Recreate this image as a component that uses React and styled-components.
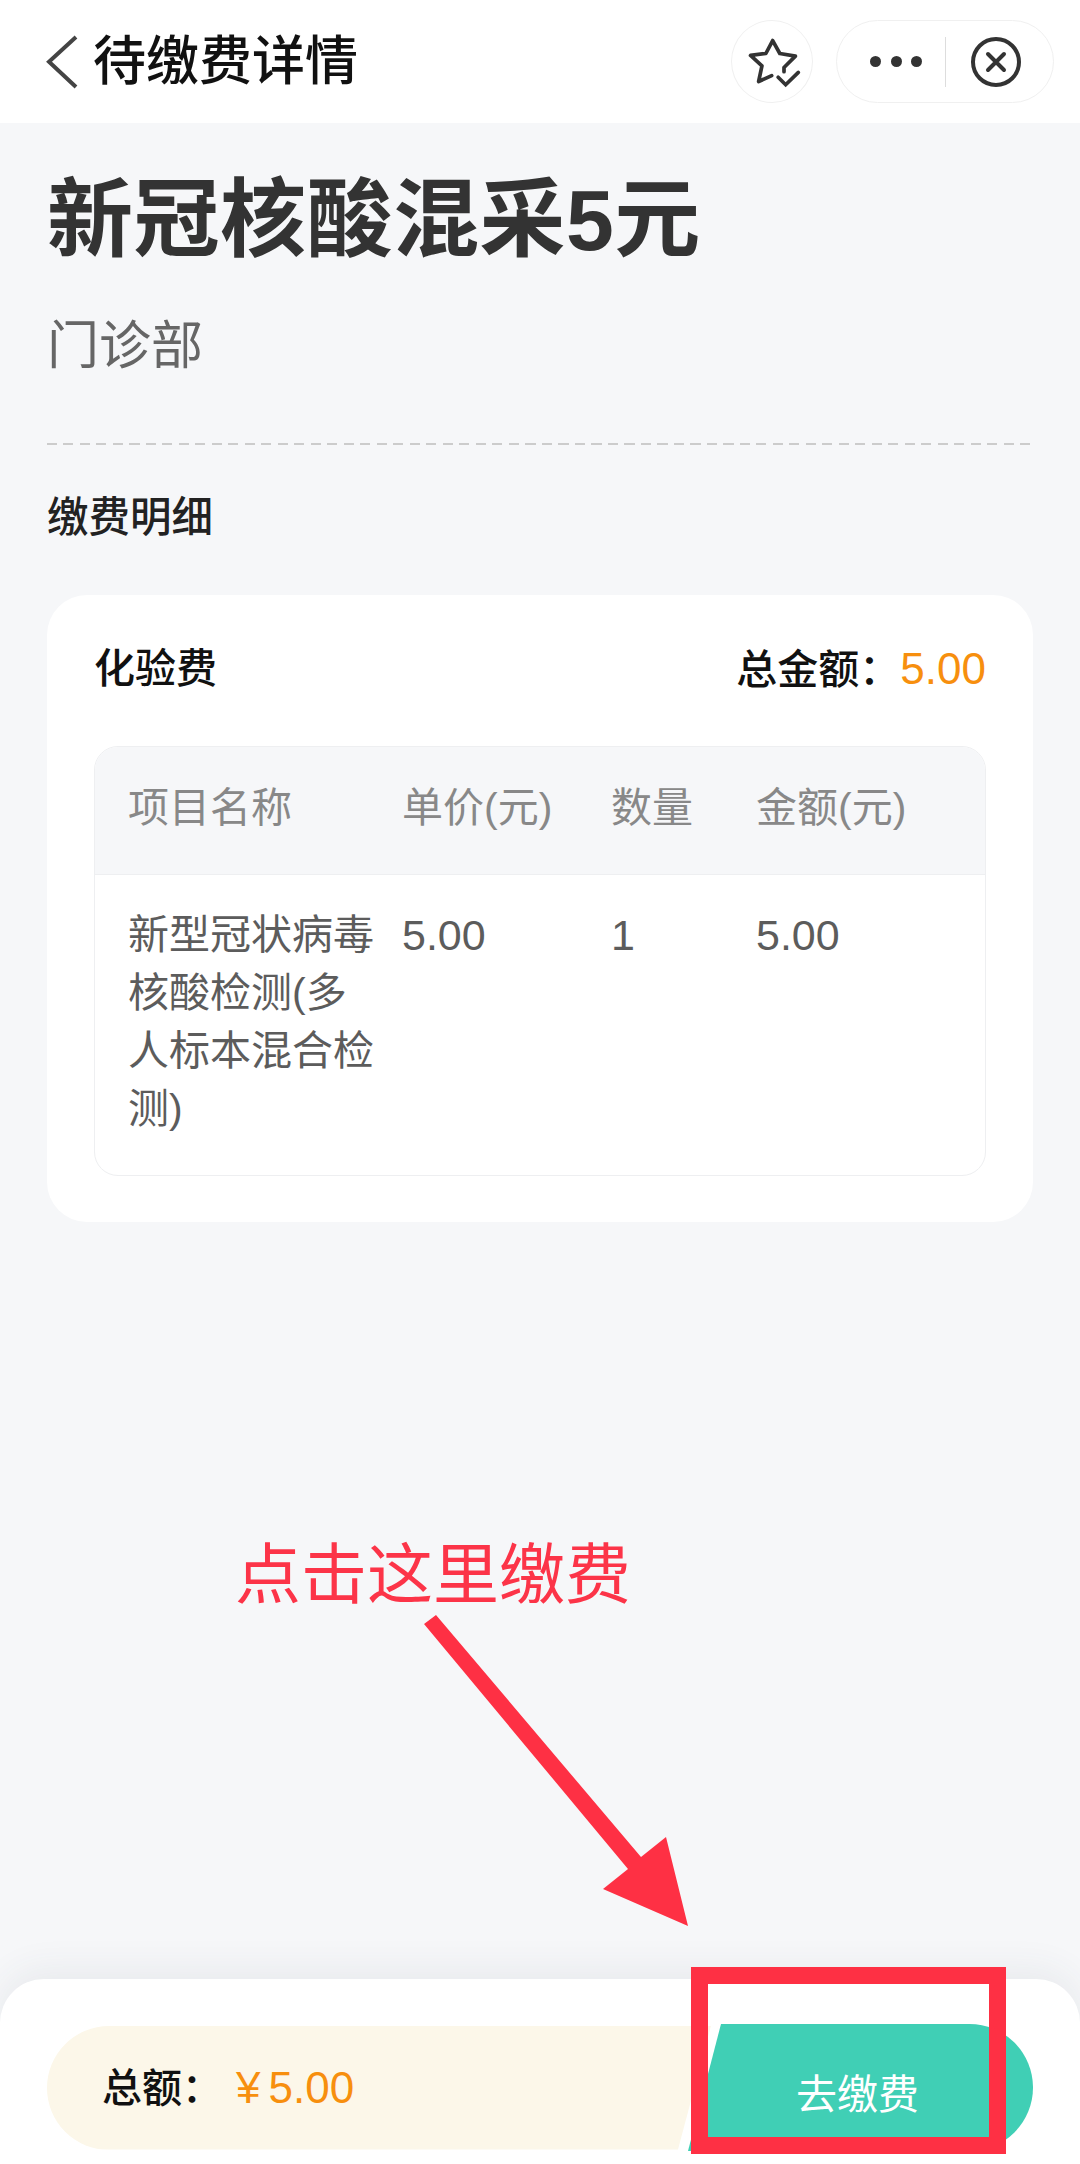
import React from 'react';
import styled, { createGlobalStyle } from 'styled-components';

const GlobalStyle = createGlobalStyle`
  html, body {
    margin: 0;
    padding: 0;
    background: #f6f7f9;
  }
  * {
    box-sizing: border-box;
  }
`;

const Page = styled.div`
  position: relative;
  width: 1080px;
  height: 2164px;
  display: flex;
  flex-direction: column;
  overflow: hidden;
  background: #f6f7f9;
  font-family: "Liberation Sans", "Noto Sans CJK SC", sans-serif;
`;

const TopBar = styled.header`
  height: 123px;
  flex-shrink: 0;
  display: flex;
  align-items: center;
  padding: 0 26px 0 46px;
  background: #fff;
`;

const TitleGroup = styled.div`
  display: flex;
  align-items: center;
  gap: 15px;
  flex: 1;
  h1 {
    margin: 0;
    font-size: 53px;
    line-height: 60px;
    font-weight: 500;
    color: #111;
    white-space: nowrap;
  }
`;

const BackIcon = styled.svg`
  width: 32px;
  height: 54px;
  flex-shrink: 0;
`;

const TopActions = styled.div`
  display: flex;
  align-items: center;
  gap: 23px;
`;

const RoundButton = styled.div`
  width: 82px;
  height: 83px;
  border: 1px solid #f0f0f0;
  border-radius: 50%;
  background: #fff;
  svg {
    display: block;
  }
`;

const Capsule = styled.div`
  width: 218px;
  height: 83px;
  display: flex;
  align-items: center;
  border: 1px solid #f0f0f0;
  border-radius: 42px;
  background: #fff;
`;

const MoreDots = styled.div`
  width: 108px;
  display: flex;
  justify-content: center;
  gap: 9.5px;
  padding-left: 10px;
  span {
    width: 11px;
    height: 11px;
    border-radius: 50%;
    background: #333;
  }
`;

const Separator = styled.div`
  width: 1px;
  height: 50px;
  background: #ddd;
`;

const Main = styled.main`
  flex: 1;
  padding: 47px 47px 0 47px;
`;

const BigTitle = styled.h2`
  margin: 0;
  font-size: 86px;
  line-height: 100px;
  font-weight: 700;
  letter-spacing: 0.5px;
  color: #333;
`;

const Department = styled.div`
  margin-top: 46px;
  font-size: 52px;
  line-height: 60px;
  color: #666;
`;

const Dashed = styled.div`
  height: 2px;
  margin: 67px -2px 0 0;
  background: repeating-linear-gradient(90deg, #ccc 0 10px, transparent 10px 16.5px);
`;

const SectionTitle = styled.div`
  margin-top: 48px;
  font-size: 41.5px;
  line-height: 50px;
  font-weight: 500;
  color: #222;
`;

const Card = styled.section`
  margin-top: 52px;
  padding: 49px 47px 46px;
  border-radius: 40px;
  background: #fff;
`;

const CardHead = styled.div`
  display: flex;
  justify-content: space-between;
  font-size: 41px;
  line-height: 50px;
  font-weight: 500;
  color: #111;
`;

const Amount = styled.span`
  color: #f78f0e;
  font-size: 44px;
  font-weight: 400;
`;

const Table = styled.div`
  margin-top: 51px;
  border: 1px solid #eeeff1;
  border-radius: 24px;
  overflow: hidden;
`;

const TableRow = styled.div`
  display: grid;
  grid-template-columns: 274px 209px 145px 1fr;
  padding-left: 33px;
  font-size: 41px;
  ${(p) =>
    p.$head
      ? `
    height: 128px;
    align-items: center;
    padding-bottom: 14px;
    background: #f6f7f9;
    border-bottom: 1px solid #eeeff1;
    color: #888;
  `
      : `
    padding-top: 31px;
    padding-bottom: 37px;
    line-height: 58px;
    color: #5c5c5c;
  `}
`;

const NameCell = styled.div`
  padding-right: 20px;
`;

const NumberCell = styled.div`
  font-size: 43px;
`;

const Footer = styled.footer`
  height: 185px;
  flex-shrink: 0;
  display: flex;
  align-items: center;
  padding: 45px 47px 13px;
  border-radius: 44px 44px 0 0;
  background: #fff;
  box-shadow: 0 -10px 36px rgba(60, 70, 80, 0.07);
`;

const TotalPill = styled.div`
  flex: 1;
  height: 124px;
  display: flex;
  align-items: center;
  padding: 0 0 5px 55px;
  border-radius: 62px 0 0 62px;
  background: #fcf7e9;
  clip-path: polygon(0 0, 100% 0, calc(100% - 33px) 100%, 0 100%);
  font-size: 40px;
  font-weight: 500;
  color: #111;
`;

const Price = styled.span`
  margin: 5px 0 0 14px;
  font-size: 44px;
  font-weight: 400;
  color: #f78f0e;
`;

const Yen = styled.span`
  margin-right: 8px;
`;

const PayButton = styled.div`
  width: 345px;
  height: 127px;
  margin-left: -23px;
  display: flex;
  align-items: center;
  justify-content: center;
  padding: 6px 6px 0 0;
  border-radius: 0 64px 64px 0;
  background: #40cfb5;
  clip-path: polygon(33px 0, 100% 0, 100% 100%, 0 100%);
  font-size: 41px;
  color: #fff;
`;

// annotations drawn on top of the screenshot
const Hint = styled.div`
  position: absolute;
  left: 235px;
  top: 1535px;
  font-size: 66px;
  line-height: 80px;
  color: #fc3448;
`;

const Arrow = styled.svg`
  position: absolute;
  left: 420px;
  top: 1610px;
`;

const RedBox = styled.div`
  position: absolute;
  left: 691px;
  top: 1967px;
  width: 315px;
  height: 187px;
  border: 17px solid #fe3044;
`;

export default function App() {
  return (
    <Page>
      <GlobalStyle />
      <TopBar>
        <TitleGroup>
          <BackIcon viewBox="0 0 32 54">
            <path d="M30 2 L3 26.7 L30 52" fill="none" stroke="#444" strokeWidth="4" />
          </BackIcon>
          <h1>待缴费详情</h1>
        </TitleGroup>
        <TopActions>
          <RoundButton>
            <svg width="80" height="81" viewBox="0 0 82 83">
              <path
                d="M40.7 56 L27.3 62 L30.7 46 L19 35.3 L34.7 33.3 L41.7 20 L49 33.3 L65 36 L53.3 47.7 L53.3 52"
                fill="none"
                stroke="#333"
                strokeWidth="3.8"
                strokeLinejoin="round"
                strokeLinecap="round"
              />
              <path
                d="M47.3 57.7 L55 65.3 L68 52.7"
                fill="none"
                stroke="#333"
                strokeWidth="3.8"
                strokeLinecap="round"
              />
            </svg>
          </RoundButton>
          <Capsule>
            <MoreDots>
              <span />
              <span />
              <span />
            </MoreDots>
            <Separator />
            <svg width="106" height="60" viewBox="0 0 106 60">
              <circle cx="50" cy="30" r="23" fill="none" stroke="#333" strokeWidth="4" />
              <path d="M42 22 L58 38 M58 22 L42 38" stroke="#333" strokeWidth="4" strokeLinecap="round" />
            </svg>
          </Capsule>
        </TopActions>
      </TopBar>

      <Main>
        <BigTitle>新冠核酸混采5元</BigTitle>
        <Department>门诊部</Department>
        <Dashed />
        <SectionTitle>缴费明细</SectionTitle>
        <Card>
          <CardHead>
            <span>化验费</span>
            <span>
              总金额：<Amount>5.00</Amount>
            </span>
          </CardHead>
          <Table>
            <TableRow $head>
              <div>项目名称</div>
              <div>单价(元)</div>
              <div>数量</div>
              <div>金额(元)</div>
            </TableRow>
            <TableRow>
              <NameCell>新型冠状病毒核酸检测(多人标本混合检测)</NameCell>
              <NumberCell>5.00</NumberCell>
              <NumberCell>1</NumberCell>
              <NumberCell>5.00</NumberCell>
            </TableRow>
          </Table>
        </Card>
      </Main>

      <Footer>
        <TotalPill>
          总额：
          <Price>
            <Yen>¥</Yen>5.00
          </Price>
        </TotalPill>
        <PayButton>去缴费</PayButton>
      </Footer>

      <Hint>点击这里缴费</Hint>
      <Arrow width="272" height="320" viewBox="0 0 272 320">
        <polygon points="4,14 16,5 221,247 246,227 268,316 183,279 208,259" fill="#fe3044" />
      </Arrow>
      <RedBox />
    </Page>
  );
}
